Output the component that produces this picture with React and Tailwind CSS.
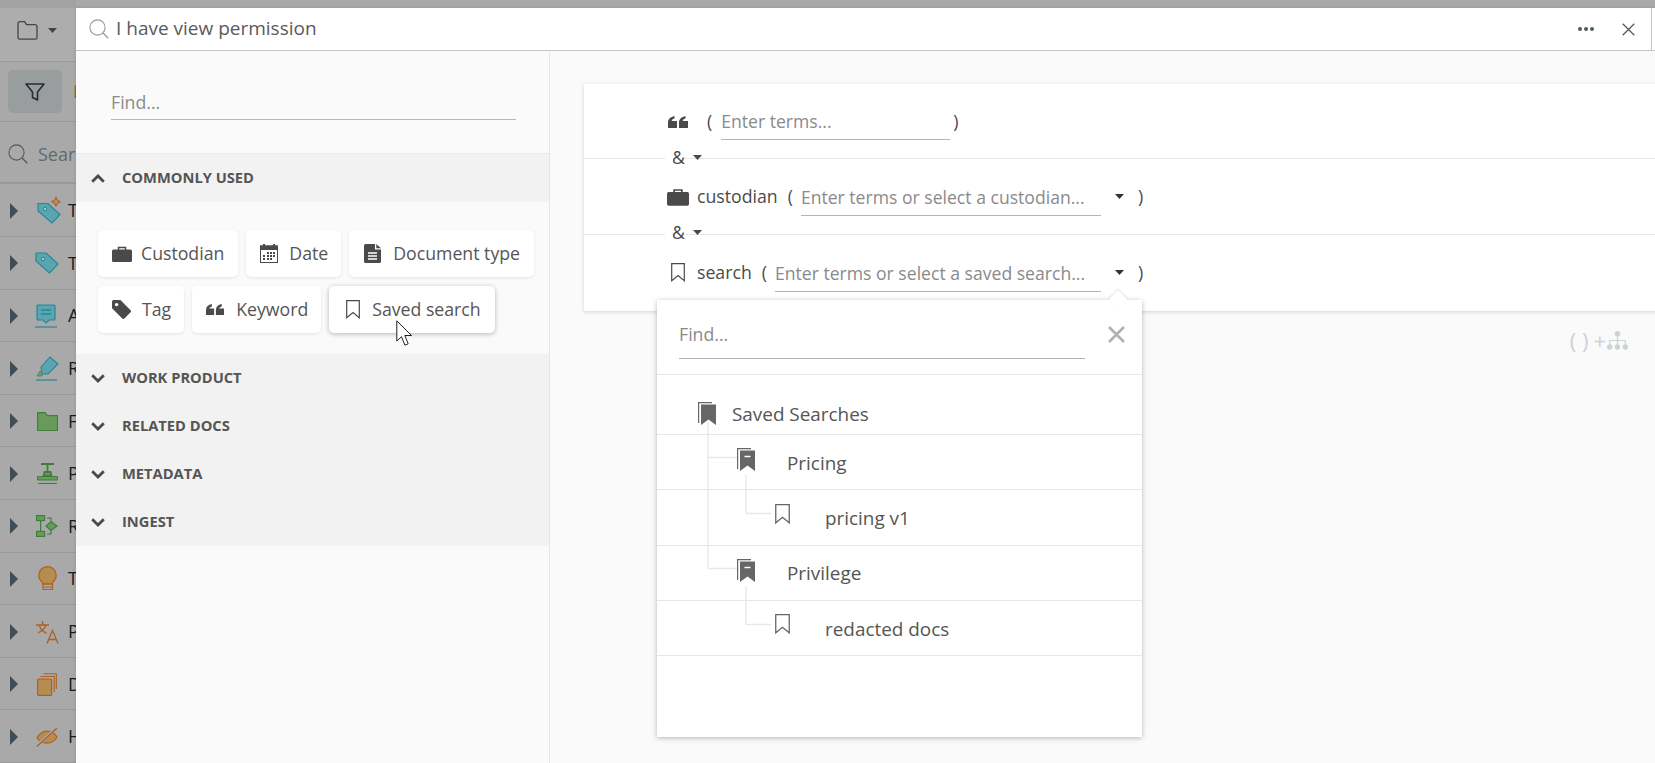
import React from "react";

const Svg = ({ w, h, vb, className = "", children }) => (
  <svg width={w} height={h} viewBox={vb || `0 0 ${w} ${h}`} className={`shrink-0 ${className}`} fill="none">
    {children}
  </svg>
);

const Briefcase = ({ w = 20, c = "#4a4a4a" }) => (
  <Svg w={w} h={Math.round((w * 16) / 20)} vb="0 0 20 16">
    <path d="M6.5 4V1.6h7V4" stroke={c} strokeWidth="1.5" />
    <rect x="0" y="3.5" width="20" height="12.5" rx="1.6" fill={c} />
  </Svg>
);
const Quote = ({ w = 18, c = "#4a4a4a" }) => (
  <Svg w={w} h={Math.round((w * 12) / 20)} vb="0 0 20 12">
    <path d="M0 12V6.500C0 3 2.500.9 6.500 0v2.600C4.500 3.200 3.800 4 3.700 5H9v7zM11 12V6.500C11 3 13.500.9 17.500 0v2.600C15.500 3.200 14.800 4 14.700 5H20v7z" fill={c} />
  </Svg>
);
const Calendar = () => (
  <Svg w={18} h={19}>
    <rect x="0.5" y="2" width="17" height="16.5" stroke="#4a4a4a" />
    <path d="M0 1.5h18V6H0z" fill="#4a4a4a" />
    <path d="M4 0v3M14 0v3" stroke="#4a4a4a" strokeWidth="2" />
    <path d="M7 8h2v2H7zM10 8h2v2h-2zM13 8h2v2h-2zM3 11h2v2H3zM7 11h2v2H7zM10 11h2v2h-2zM13 11h2v2h-2zM3 14h2v2H3zM7 14h2v2H7zM10 14h2v2h-2z" fill="#4a4a4a" />
  </Svg>
);
const Doc = () => (
  <Svg w={17} h={19}>
    <path d="M1.5 0H11v5.5h6V17.5a1.5 1.5 0 0 1-1.5 1.5h-14A1.5 1.5 0 0 1 0 17.5v-16A1.5 1.5 0 0 1 1.5 0z" fill="#4a4a4a" />
    <path d="M12.3 0 17 4.3h-4.7z" fill="#4a4a4a" />
    <path d="M4 9h9M4 12h9M4 15h9" stroke="#fff" strokeWidth="1.3" />
  </Svg>
);
const Tag = () => (
  <Svg w={19} h={19}>
    <path d="M0 1.6A1.6 1.6 0 0 1 1.6 0H8.4L18.6 10.2a1.5 1.5 0 0 1 0 2.1l-6.2 6.2a1.5 1.5 0 0 1-2.1 0L0 8.3z" fill="#4a4a4a" />
    <circle cx="4.6" cy="4.6" r="1.7" fill="#fff" />
  </Svg>
);
const Bookmark = ({ w = 14, h = 19, c = "#4a4a4a" }) => (
  <Svg w={w} h={h} vb="0 0 14 19">
    <path d="M.7.7h12.6v17l-6.3-5.2-6.3 5.2z" stroke={c} strokeWidth="1.2" strokeLinejoin="miter" />
  </Svg>
);
const StackMark = ({ minus }) => (
  <Svg w={18} h={23}>
    <path d="M.6 21V.6H14" stroke="#666" strokeWidth="1.2" />
    <path d="M3 2.5h15V23l-7.5-5.5L3 23z" fill="#666" />
    {minus && <path d="M7.5 8.5h6" stroke="#fff" strokeWidth="1.5" />}
  </Svg>
);
const Caret = ({ c = "#4a4a4a", w = 9 }) => (
  <Svg w={w} h={5} vb="0 0 9 5">
    <path d="M0 0h9L4.5 5z" fill={c} />
  </Svg>
);
const Chevron = ({ up }) => (
  <Svg w={14} h={9} vb="0 0 14 9">
    <path d={up ? "M1.2 7.8 7 2l5.800 5.800" : "M1.200 1.200 7 7l5.800-5.800"} stroke="#4a4a4a" strokeWidth="2.800" />
  </Svg>
);
const Lens = ({ c, s = 20 }) => (
  <Svg w={s} h={s} vb="0 0 20 20">
    <circle cx="8.5" cy="8.5" r="7.6" stroke={c} strokeWidth="1.1" />
    <path d="M14 14l5.3 5.3" stroke={c} strokeWidth="1.3" />
  </Svg>
);

const T = "#2a8595", TF = "#5aa6b0", G = "#3f7f3e", GF = "#699a5c", O = "#b0601e", OF = "#b58d50";

const sideIcons = [
  <Svg w={26} h={28} key="a" className="ml-[5px]">
    <path d="M1 6.500h10l12 11-8 8.500L1 14z" fill={TF} stroke={T} strokeWidth="1.200" />
    <circle cx="8" cy="12" r="1.800" fill="#a8c8cc" stroke={T} />
    <path d="M19 0c.5 3 1.500 4 4.500 4.700C20.500 5.400 19.500 6.400 19 9.500 18.500 6.400 17.500 5.400 14.500 4.700 17.500 4 18.500 3 19 0z" fill="#b9915a" stroke={O} strokeWidth="1.100" />
  </Svg>,
  <Svg w={24} h={22} key="b">
    <path d="M1 1h10l12 11-8.500 9L1 9z" fill={TF} stroke={T} strokeWidth="1.200" />
    <circle cx="8" cy="7" r="1.800" fill="#a8c8cc" stroke={T} />
  </Svg>,
  <Svg w={24} h={24} key="c">
    <path d="M3 1h16a1 1 0 0 1 1 1v13a1 1 0 0 1-1 1h-5l-3 3-3-3H3a1 1 0 0 1-1-1V2a1 1 0 0 1 1-1z" fill={TF} stroke={T} strokeWidth="1.2" />
    <path d="M6 6h10M6 10h10" stroke={T} strokeWidth="1.300" />
    <path d="M0 23h22" stroke={T} strokeWidth="1.200" />
  </Svg>,
  <Svg w={24} h={25} key="d">
    <path d="M6 11 15 1l8 7-10 10-6 0z" fill={TF} stroke={T} strokeWidth="1.100" />
    <path d="M2 20l3-5 3 3-1.500 2z" fill="#7f9a45" stroke={T} strokeWidth=".8" />
    <path d="M1 24h21" stroke={T} strokeWidth="1.200" />
  </Svg>,
  <Svg w={21} h={19} key="e">
    <path d="M.6.6h7.400l2.500 3h10v15H.6z" fill={GF} stroke={G} strokeWidth="1.200" />
  </Svg>,
  <Svg w={21} h={21} key="f">
    <path d="M4 1h13M10.500 2v7M7.500 9h6l1 4H6.500z" stroke={G} strokeWidth="1.800" fill={GF} />
    <path d="M.6 13.500h20V17H.6z" fill={GF} stroke={G} strokeWidth="1" />
    <path d="M1 20.500h19" stroke={G} strokeWidth="1.100" />
  </Svg>,
  <Svg w={23} h={23} key="g">
    <rect x=".6" y=".6" width="8" height="5" fill={GF} stroke={G} strokeWidth="1.200" />
    <rect x=".6" y="16.400" width="8" height="5" fill={GF} stroke={G} strokeWidth="1.200" />
    <path d="M4.600 6v10M11 3h4v3M11 19h4v-3" stroke={G} strokeWidth="1.200" />
    <path d="M15 6.500l6 4.500-6 4.500-5-4.500z" fill={GF} stroke={G} strokeWidth="1.200" />
  </Svg>,
  <Svg w={19} h={25} key="h">
    <path d="M9.500.7a8.700 8.700 0 0 1 5 15.700V18h-10v-1.600A8.700 8.700 0 0 1 9.500.7z" fill={OF} stroke={O} strokeWidth="1.200" />
    <path d="M5 18h9.500v5.500H5zM5 21h9.500" stroke={O} strokeWidth="1.200" />
  </Svg>,
  <Svg w={23} h={24} key="i">
    <path d="M0 5h13M6.500 1v4M2 13c4-2 7-5 8-8M3.500 6c1 3 4 6 7.500 7.500" stroke={O} strokeWidth="1.300" />
    <path d="M11 23.500 16.500 10.500 22 23.500M12.800 19.500h7.400" stroke={O} strokeWidth="1.300" />
  </Svg>,
  <Svg w={20} h={23} key="j">
    <rect x=".6" y="6" width="14" height="16.400" rx="1" fill={OF} stroke={O} strokeWidth="1.200" />
    <path d="M3.500 3.500h13.700V19M6.500.7h12.800V16" stroke={O} strokeWidth="1.100" />
  </Svg>,
  <Svg w={23} h={20} key="k">
    <path d="M1 11c5-9 15-9 20-1-5 8-15 8-20 1z" fill={OF} stroke={O} strokeWidth="1.200" />
    <path d="M0 19.500 21 .5" stroke="#a8a8a8" strokeWidth="3" />
    <path d="M1 19.500 21 1" stroke={O} strokeWidth="1.300" />
  </Svg>,
];
const sideLabels = ["T", "T", "A", "R", "F", "P", "R", "T", "P", "D", "H"];

const Chip = ({ icon, label, hover, gap = "gap-[9px]", pl = "pl-[14px]", pr = "pr-[14px]" }) => (
  <div
    className={`flex h-[47px] items-center ${gap} ${pl} ${pr} rounded-[5px] bg-white text-[17.7px] text-[#555] ${
      hover ? "shadow-[0_1px_5px_rgba(0,0,0,0.28)]" : "shadow-[0_1px_3px_rgba(0,0,0,0.09)]"
    }`}
  >
    {icon}
    <span>{label}</span>
  </div>
);

const Section = ({ label, up }) => (
  <div className="flex h-12 items-center gap-[17px] pl-[15px] text-[14.7px] font-bold text-[#555]">
    <Chevron up={up} />
    <span className="-mt-[1px]">{label}</span>
  </div>
);

const Field = ({ w, label }) => (
  <div className={`${w} flex h-[36px] items-center border-b border-[#b5b5b5] text-[17.6px] text-[#8a8a8a] whitespace-nowrap`}>{label}</div>
);

const AndLine = ({ top }) => (
  <div className={`absolute left-[81px] ${top} flex h-[28px] items-center gap-[8px] text-[17.7px] text-[#4a4a4a]`}>
    <span className="bg-white pl-[7px]">&amp;</span>
    <Caret />
  </div>
);

const TreeRow = ({ h = "h-[55.25px]", pl, icon, label, gap }) => (
  <div className={`flex ${h} items-center ${pl} ${gap} border-b border-[#e6e6e6] text-[18.9px] text-[#555]`}>
    {icon}
    <span>{label}</span>
  </div>
);

export default function App() {
  return (
    <div className="relative h-[763px] w-[1655px] overflow-hidden bg-[#a9a9a9] font-['Open_Sans',sans-serif]">
      {/* dimmed application behind the dialog */}
      <div className="flex h-full w-[76px] flex-col overflow-hidden whitespace-nowrap">
        <div className="flex h-[64px] items-center gap-[9px] border-b border-[#999] bg-[linear-gradient(#a2a2a2_0,#a2a2a2_7px,#adadad_9px)] pl-[17px]">
          <Svg w={21} h={19}>
            <path d="M1 16.500V2.500A1.800 1.800 0 0 1 2.800.7h4.700l2 3h8.500a2 2 0 0 1 2 2v11a1.500 1.500 0 0 1-1.500 1.500H2.500A1.500 1.500 0 0 1 1 16.500z" stroke="#3c474e" strokeWidth="1.300" />
          </Svg>
          <Caret c="#3c474e" w={11} />
        </div>
        <div className="flex h-[60px] shrink-0 items-center gap-[11px] border-b border-[#999] pl-[8px]">
          <div className="flex h-[43px] w-[54px] shrink-0 items-center justify-center rounded-[5px] bg-[#9a9d9e]">
            <Svg w={20} h={18}>
              <path d="M1 1h18l-6.500 8v8l-5-2.500V9z" stroke="#1f2d38" strokeWidth="1.600" strokeLinejoin="round" />
            </Svg>
          </div>
          <span className="text-[18px] text-[#a5641f]">I</span>
        </div>
        <div className="flex h-[62px] shrink-0 items-center gap-[10px] border-b-2 border-[#999] pl-[8px] pt-[4px] text-[18px] text-[#5f6a70]">
          <Lens c="#4d5a61" />
          <span>Sear</span>
        </div>
        {sideIcons.map((ic, i) => (
          <div key={i} className="flex h-[52.6px] shrink-0 items-center border-b border-[#999] pl-[10px] pt-[1px]">
            <Svg w={8} h={16}>
              <path d="M0 0l8 8-8 8z" fill="#3f4d57" />
            </Svg>
            <div className="flex w-[50px] shrink-0 items-center justify-center pl-[8px]">{ic}</div>
            <span className="text-[18px] text-[#161a1e]">{sideLabels[i]}</span>
          </div>
        ))}
      </div>

      {/* dialog */}
      <div className="absolute left-[76px] top-[8px] flex h-[755px] w-[1590px] flex-col bg-[#fafafa] shadow-[0_0_3px_rgba(0,0,0,0.15)]">
        <div className="flex h-[43px] shrink-0 items-center border-b border-[#c4c4c4] bg-white pl-[13px]">
          <Lens c="#9a9a9a" />
          <span className="ml-[7px] -mt-[2px] text-[19px] text-[#5a5a5a]">I have view permission</span>
          <div className="ml-auto flex items-center gap-[2px]">
            <i className="size-[4px] rounded-full bg-[#4f5b63]" />
            <i className="size-[4px] rounded-full bg-[#4f5b63]" />
            <i className="size-[4px] rounded-full bg-[#4f5b63]" />
          </div>
          <Svg w={13} h={13} className="ml-[28px]">
            <path d="M.7.7l11.600 11.600M12.300.7.700 12.300" stroke="#4f5b63" strokeWidth="1.300" />
          </Svg>
          <div className="ml-[16px] mr-[14px] h-full w-px bg-[#c4c4c4]" />
        </div>

        <div className="flex min-h-0 flex-1">
          {/* left pane */}
          <div className="flex w-[474px] shrink-0 flex-col border-r border-[#e6e6e6]">
            <div className="h-[102px] shrink-0 pl-[35px] pr-[33px] pt-[32px]">
              <div className="flex h-[37px] items-center border-b border-[#b8b8b8] pt-[2px] text-[17.7px] text-[#8a8a8a]">Find...</div>
            </div>
            <div className="bg-[#f2f2f2]">
              <div className="border-t border-[#e9e9e9]">
                <Section label="COMMONLY USED" up />
              </div>
              <div className="h-[152px] bg-[#fafafa] pl-[22px] pt-[28px]">
                <div className="flex flex-col gap-[9px]">
                  <div className="flex gap-[8px]">
                    <Chip icon={<Briefcase />} label="Custodian" />
                    <Chip icon={<Calendar />} label="Date" gap="gap-[11px]" pr="pr-[13px]" />
                    <Chip icon={<Doc />} label="Document type" gap="gap-[12px]" pl="pl-[15px]" />
                  </div>
                  <div className="flex gap-[8px]">
                    <Chip icon={<Tag />} label="Tag" gap="gap-[11px]" pr="pr-[13px]" />
                    <Chip icon={<Quote />} label="Keyword" gap="gap-[12px]" pr="pr-[13px]" />
                    <Chip icon={<Bookmark />} label="Saved search" hover gap="gap-[12px]" pl="pl-[17px]" />
                  </div>
                </div>
              </div>
              <Section label="WORK PRODUCT" />
              <Section label="RELATED DOCS" />
              <Section label="METADATA" />
              <Section label="INGEST" />
            </div>
          </div>

          {/* right pane */}
          <div className="relative min-w-0 flex-1 pl-[34px] pt-[33px]">
            <div className="bg-white text-[17.7px] text-[#4a4a4a] shadow-[0_1px_4px_rgba(0,0,0,0.16)]">
              <div className="flex h-[74px] items-center pl-[84px] pt-[1px]">
                <Quote w={20} />
                <span className="ml-[19px] mr-[9px]">(</span>
                <Field w="w-[229px]" label="Enter terms..." />
                <span className="ml-[3px]">)</span>
              </div>
              <div className="relative flex h-[76px] items-center border-t border-[#e6e6e6] pl-[83px]">
                <AndLine top="top-[-16px]" />
                <Briefcase w={22} />
                <span className="ml-[8px]">custodian</span>
                <span className="ml-[10px] mr-[8px]">(</span>
                <div className="mt-[2px] w-[300px]">
                  <Field w="w-full" label="Enter terms or select a custodian..." />
                </div>
                <div className="ml-[14px]">
                  <Caret c="#333" />
                </div>
                <span className="ml-[14px]">)</span>
              </div>
              <div className="relative flex h-[77px] items-center border-t border-[#e6e6e6] pb-[2px] pl-[87px]">
                <AndLine top="top-[-17px]" />
                <Bookmark />
                <span className="ml-[12px]">search</span>
                <span className="ml-[10px] mr-[8px]">(</span>
                <div className="mt-[4px] w-[326px]">
                  <Field w="w-full" label="Enter terms or select a saved search..." />
                </div>
                <div className="ml-[14px]">
                  <Caret c="#333" />
                </div>
                <span className="ml-[14px]">)</span>
              </div>
            </div>
            <div className="mt-[18px] flex items-center justify-end gap-[5px] text-[22px] leading-none text-[#ccd2d6]" style={{ width: 1044 }}>
              <span>( )</span>
              <span className="-mr-[4px]">+</span>
              <Svg w={21} h={19}>
                <circle cx="10.500" cy="2.700" r="2.700" fill="#ccd2d6" />
                <circle cx="2.700" cy="16" r="2.700" fill="#ccd2d6" />
                <circle cx="10.500" cy="16" r="2.700" fill="#ccd2d6" />
                <circle cx="18.300" cy="16" r="2.700" fill="#ccd2d6" />
                <path d="M10.500 3v11M2.700 14V9.500h15.600V14" stroke="#ccd2d6" strokeWidth="1.200" />
              </Svg>
            </div>
          </div>
        </div>

        {/* saved search dropdown */}
        <div className="absolute left-[581px] top-[292px] h-[437px] w-[485px] bg-white shadow-[0_1px_5px_rgba(0,0,0,0.28)]">
          <div className="absolute -top-[7px] left-[454px] size-[14px] rotate-45 bg-white shadow-[-1px_-1px_2px_rgba(0,0,0,0.1)]" />
          <div className="relative flex h-[75px] items-center border-b border-[#e6e6e6] pb-[5px] pl-[22px]">
            <div className="flex h-[48px] w-[406px] items-center border-b border-[#b5b5b5] text-[17.7px] text-[#8a8a8a]">Find...</div>
            <Svg w={17} h={17} className="ml-[23px]">
              <path d="M1 1l15 15M16 1 1 16" stroke="#b0b0b0" strokeWidth="2.600" />
            </Svg>
          </div>
          <div className="relative">
            <svg width="120" height="260" className="absolute left-0 top-0" fill="none">
              <path d="M51 47v146.500H80M51 82.500H80M89 100v38.500h25M89 211v38.500h25" stroke="#e6e9e9" strokeWidth="1.300" />
            </svg>
            <TreeRow h="h-[60px]" pl="pl-[41px] pt-[20px]" gap="gap-[16px]" icon={<div className="-mt-[2px]"><StackMark /></div>} label="Saved Searches" />
            <TreeRow pl="pl-[80px] pt-[2px]" gap="gap-[32px]" icon={<div className="-mt-[7px]"><StackMark minus /></div>} label="Pricing" />
            <TreeRow pl="pl-[118px] pt-[2px]" gap="gap-[35px]" icon={<div className="-mt-[9px]"><Bookmark w={15} h={22} c="#666" /></div>} label="pricing v1" />
            <TreeRow pl="pl-[80px] pt-[2px]" gap="gap-[32px]" icon={<div className="-mt-[7px]"><StackMark minus /></div>} label="Privilege" />
            <TreeRow pl="pl-[118px] pt-[2px]" gap="gap-[35px]" icon={<div className="-mt-[9px]"><Bookmark w={15} h={22} c="#666" /></div>} label="redacted docs" />
          </div>
        </div>

        {/* mouse pointer */}
        <svg width="18" height="27" viewBox="0 0 18 27" className="absolute left-[320px] top-[312px]" fill="none">
          <path d="M.8.8V21l4.700-4.300 3.400 8.500 3.300-1.400-3.400-8.300h6.700z" fill="#fff" stroke="#222" strokeWidth="1" />
        </svg>
      </div>
    </div>
  );
}
